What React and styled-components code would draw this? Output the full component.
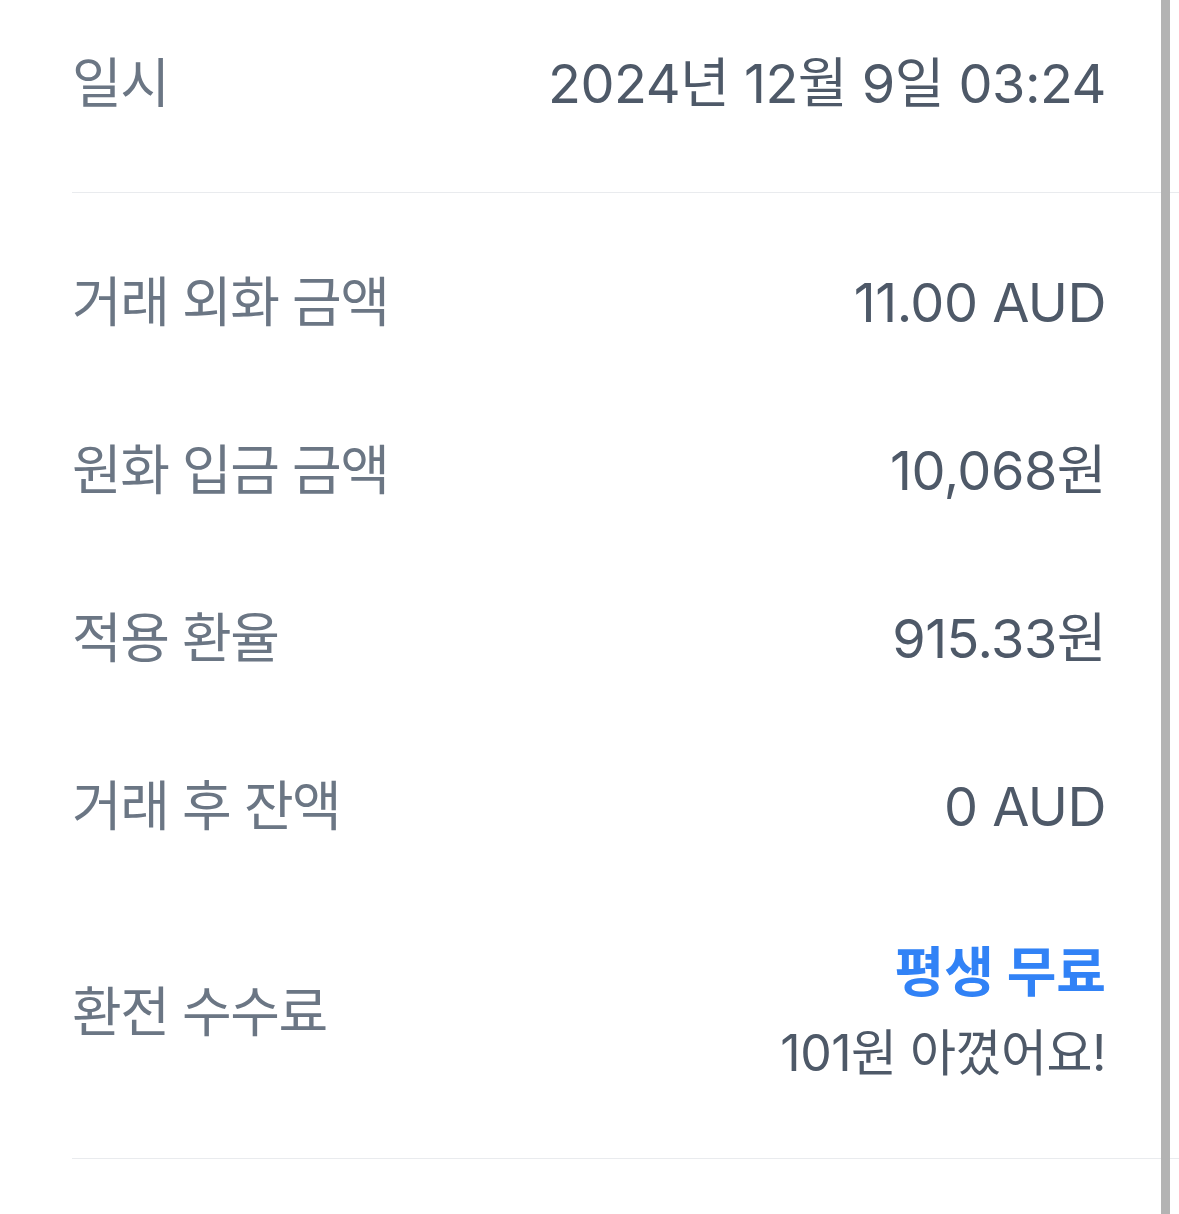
import React from "react";
import styled, { createGlobalStyle } from "styled-components";

const Global = createGlobalStyle`
  html, body { margin: 0; padding: 0; background: #ffffff; }
  body { font-family: Inter, "Noto Sans CJK KR", "Noto Sans", sans-serif; -webkit-font-smoothing: antialiased; }
`;

const Page = styled.div`
  position: relative;
  width: 1179px;
  height: 1214px;
  overflow: hidden;
  background: #ffffff;
`;

const Section = styled.section`
  display: flex;
  flex-direction: column;
  padding: 26px 0 23px;
`;

const Row = styled.div`
  display: flex;
  justify-content: space-between;
  align-items: center;
  padding: ${(p) => (p.$head ? "42px 73px 66px 72px" : "42px 73px 42px 72px")};
`;

const Label = styled.span`
  font-size: 54px;
  line-height: 84px;
  color: #6b7684;
  letter-spacing: -1.5px;
  white-space: nowrap;
`;

const Value = styled.span`
  font-size: 54px;
  line-height: 84px;
  color: #4e5968;
  letter-spacing: -0.5px;
  white-space: nowrap;
`;

const ValueStack = styled.div`
  display: flex;
  flex-direction: column;
  align-items: flex-end;
`;

const Highlight = styled.span`
  font-size: 54px;
  line-height: 80px;
  font-weight: 700;
  color: #3182f6;
  white-space: nowrap;
`;

const SubNote = styled.span`
  font-size: 50px;
  line-height: 80px;
  color: #4e5968;
  letter-spacing: -0.5px;
  white-space: nowrap;
`;

const Divider = styled.hr`
  margin: 0 0 0 72px;
  border: 0;
  height: 1px;
  background: #e9ebee;
`;

const Scrollbar = styled.div`
  position: absolute;
  top: 0;
  right: 9px;
  width: 9px;
  height: 100%;
  background: #b3b3b3;
`;

const rows = [
  ["거래 외화 금액", "11.00 AUD"],
  ["원화 입금 금액", "10,068원"],
  ["적용 환율", "915.33원"],
  ["거래 후 잔액", "0 AUD"],
];

export default function App() {
  return (
    <Page>
      <Global />
      <Row $head>
        <Label>일시</Label>
        <Value>2024년 12월 9일 03:24</Value>
      </Row>
      <Divider />
      <Section>
        {rows.map(([l, v]) => (
          <Row key={l}>
            <Label>{l}</Label>
            <Value>{v}</Value>
          </Row>
        ))}
        <Row>
          <Label>환전 수수료</Label>
          <ValueStack>
            <Highlight>평생 무료</Highlight>
            <SubNote>101원 아꼈어요!</SubNote>
          </ValueStack>
        </Row>
      </Section>
      <Divider />
      <Scrollbar />
    </Page>
  );
}
